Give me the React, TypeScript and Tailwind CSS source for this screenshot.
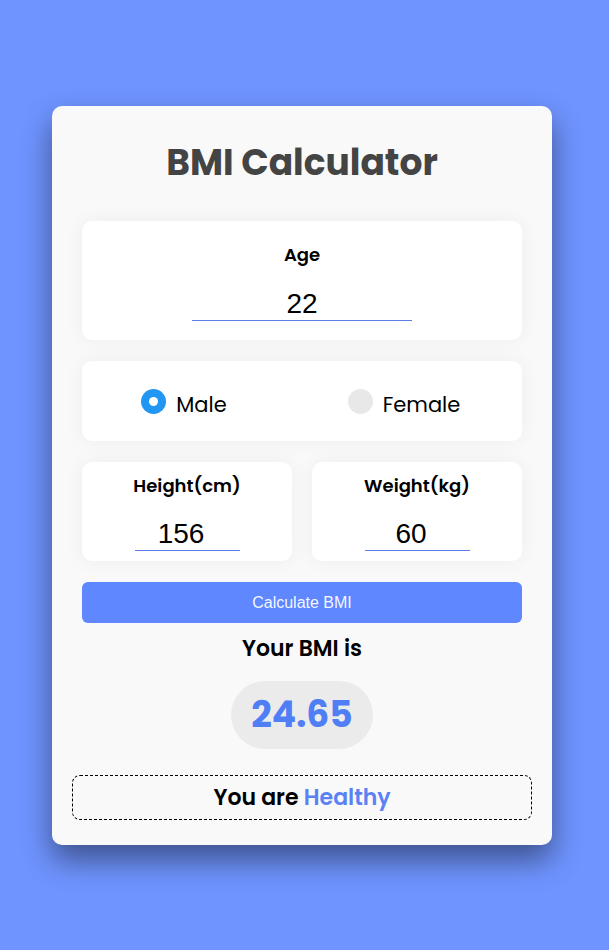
import { useState } from "react";

const sans = "font-['Poppins','Inter','Noto_Sans',sans-serif]";

function Radio({ checked, label }: { checked: boolean; label: string }) {
  return (
    <label className="flex items-center gap-[10px] cursor-pointer">
      {checked ? (
        <span className="w-[25px] h-[25px] rounded-full bg-[#2196f3] flex items-center justify-center">
          <span className="w-[9px] h-[9px] rounded-full bg-white" />
        </span>
      ) : (
        <span className="w-[25px] h-[25px] rounded-full bg-[#e8e8e8]" />
      )}
      <span className="text-[21px] text-black leading-none mt-[6px]">{label}</span>
    </label>
  );
}

function NumberField({ label, value }: { label: string; value: string }) {
  return (
    <div className="bg-white rounded-[10px] shadow-[0_0_20px_rgba(0,0,0,0.05)] h-[99px] flex flex-col items-center pt-[12px]">
      <div className="text-[18px] font-semibold text-black leading-[24px]">{label}</div>
      <input
        readOnly
        value={value}
        className="w-[105px] pr-[12px] mt-[20px] text-center text-[28px] font-['Liberation_Sans',Arial,sans-serif] text-black leading-[32px] border-b border-[#5b7fe6] outline-none bg-transparent"
      />
    </div>
  );
}

export default function App() {
  const [gender] = useState("male");

  return (
    <div className={`min-h-[950px] bg-[#6f94ff] flex justify-center pr-[5px] pt-[106px] ${sans}`}>
      <div className="w-[500px] h-[739px] bg-[#f9f9f9] rounded-[10px] shadow-[0_15px_30px_rgba(0,0,0,0.45)] px-[30px] pt-[30px]">
        <h1 className="text-center text-[36px] font-bold text-[#444444] leading-[54px]">BMI Calculator</h1>

        <div className="mt-[31px] bg-white rounded-[10px] shadow-[0_0_20px_rgba(0,0,0,0.05)] h-[119px] flex flex-col items-center pt-[22px]">
          <div className="text-[18px] font-semibold text-black leading-[24px]">Age</div>
          <input
            readOnly
            value="22"
            className="w-[220px] mt-[21px] text-center text-[28px] font-['Liberation_Sans',Arial,sans-serif] text-black leading-[32px] border-b border-[#5b7fe6] outline-none bg-transparent"
          />
        </div>

        <div className="mt-[21px] bg-white rounded-[10px] shadow-[0_0_20px_rgba(0,0,0,0.05)] h-[80px] grid grid-cols-2 items-center">
          <div className="flex justify-center">
            <div className="mr-[16px]">
              <Radio checked={gender === "male"} label="Male" />
            </div>
          </div>
          <div className="flex justify-center">
            <div className="ml-[-16px]">
              <Radio checked={gender === "female"} label="Female" />
            </div>
          </div>
        </div>

        <div className="mt-[21px] grid grid-cols-2 gap-[20px]">
          <NumberField label="Height(cm)" value="156" />
          <NumberField label="Weight(kg)" value="60" />
        </div>

        <button className="mt-[21px] w-full h-[41px] rounded-[6px] bg-[#5f87ff] text-white/95 text-[16px] font-['Liberation_Sans',Arial,sans-serif]">
          Calculate BMI
        </button>

        <div className="mt-[11px] text-center text-[22px] font-semibold text-black leading-[30px]">Your BMI is</div>

        <div className="mt-[17px] flex justify-center">
          <div className="w-[142px] h-[68px] rounded-full bg-[#ebebeb] flex items-center justify-center text-[36px] font-bold text-[#4f7ef5] leading-none">
            24.65
          </div>
        </div>

        <div className="mt-[26px] mx-[-10px] h-[45px] rounded-[8px] border border-dashed border-black flex items-center justify-center text-[22px] font-semibold text-black">
          You are&nbsp;<span className="text-[#5b82f5]">Healthy</span>
        </div>
      </div>
    </div>
  );
}
